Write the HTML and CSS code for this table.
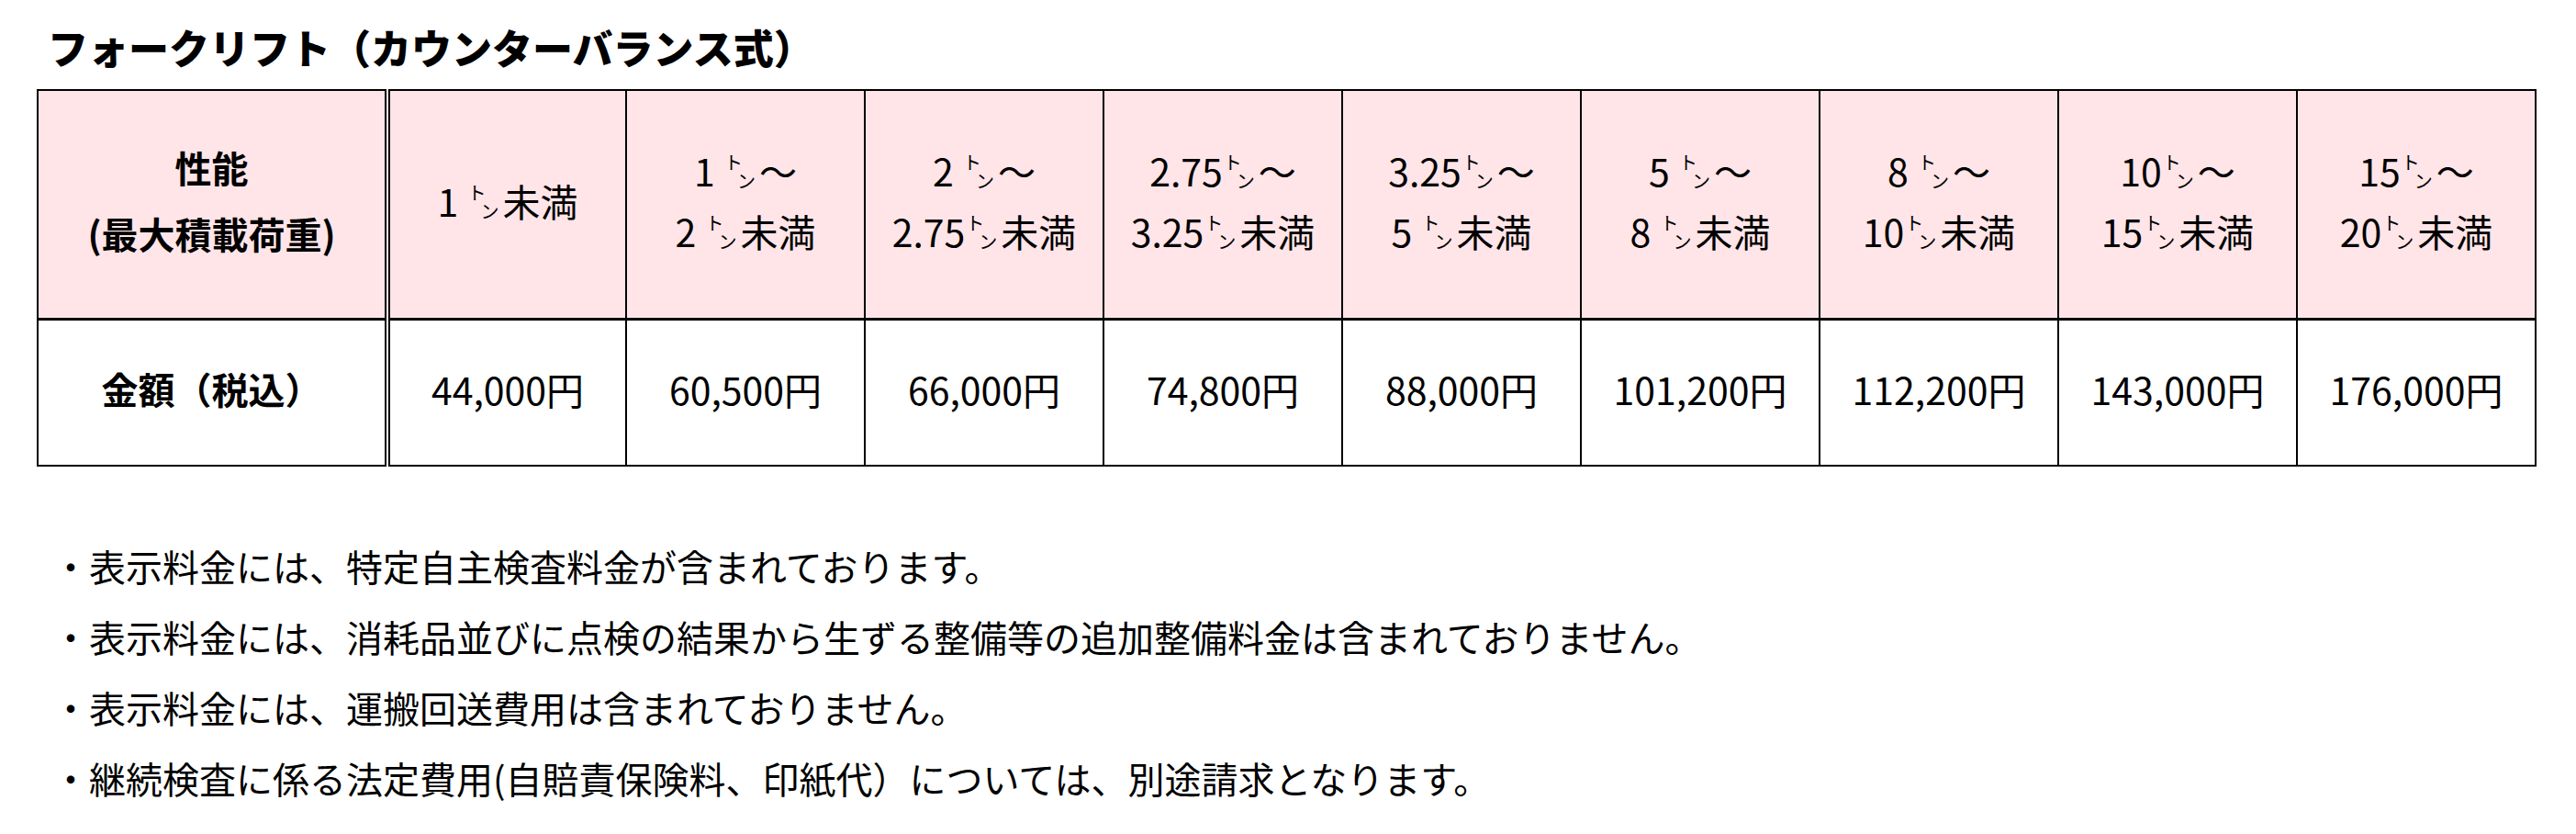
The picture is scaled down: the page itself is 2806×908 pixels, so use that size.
FILE: index.html
```html
<!DOCTYPE html>
<html lang="ja">
<head>
<meta charset="utf-8">
<title>フォークリフト（カウンターバランス式）</title>
<link rel="stylesheet" href="styles.css">
</head>
<body>
<div class="page">
  <h1 class="title">フォークリフト（カウンターバランス式）</h1>
  <table class="price">
    <colgroup>
      <col class="c-label">
      <col span="9" class="c-val">
    </colgroup>
    <thead>
      <tr>
        <th class="label">性能<br>(最大積載荷重)</th>
        <th>1 <span class="ton"><span class="to">ト</span><span class="n">ン</span></span>未満</th>
        <th>1 <span class="ton"><span class="to">ト</span><span class="n">ン</span></span>〜<br>2 <span class="ton"><span class="to">ト</span><span class="n">ン</span></span>未満</th>
        <th>2 <span class="ton"><span class="to">ト</span><span class="n">ン</span></span>〜<br>2.75<span class="ton"><span class="to">ト</span><span class="n">ン</span></span>未満</th>
        <th>2.75<span class="ton"><span class="to">ト</span><span class="n">ン</span></span>〜<br>3.25<span class="ton"><span class="to">ト</span><span class="n">ン</span></span>未満</th>
        <th>3.25<span class="ton"><span class="to">ト</span><span class="n">ン</span></span>〜<br>5 <span class="ton"><span class="to">ト</span><span class="n">ン</span></span>未満</th>
        <th>5 <span class="ton"><span class="to">ト</span><span class="n">ン</span></span>〜<br>8 <span class="ton"><span class="to">ト</span><span class="n">ン</span></span>未満</th>
        <th>8 <span class="ton"><span class="to">ト</span><span class="n">ン</span></span>〜<br>10<span class="ton"><span class="to">ト</span><span class="n">ン</span></span>未満</th>
        <th>10<span class="ton"><span class="to">ト</span><span class="n">ン</span></span>〜<br>15<span class="ton"><span class="to">ト</span><span class="n">ン</span></span>未満</th>
        <th>15<span class="ton"><span class="to">ト</span><span class="n">ン</span></span>〜<br>20<span class="ton"><span class="to">ト</span><span class="n">ン</span></span>未満</th>
      </tr>
    </thead>
    <tbody>
      <tr>
        <th class="label">金額（税込）</th>
        <td>44,000円</td>
        <td>60,500円</td>
        <td>66,000円</td>
        <td>74,800円</td>
        <td>88,000円</td>
        <td>101,200円</td>
        <td>112,200円</td>
        <td>143,000円</td>
        <td>176,000円</td>
      </tr>
    </tbody>
  </table>
  <ul class="notes">
    <li>・表示料金には、特定自主検査料金が含まれております。</li>
    <li>・表示料金には、消耗品並びに点検の結果から生ずる整備等の追加整備料金は含まれておりません。</li>
    <li>・表示料金には、運搬回送費用は含まれておりません。</li>
    <li>・継続検査に係る法定費用(自賠責保険料、印紙代）については、別途請求となります。</li>
  </ul>
</div>
</body>
</html>
```

FILE: styles.css
```css
html, body {
  margin: 0;
  padding: 0;
  background: #ffffff;
  color: #000000;
  font-family: "Noto Sans CJK JP", "Noto Sans", sans-serif;
}

.page {
  padding: 21px 0 0 40px;
}

.title {
  margin: 0 0 16px;
  padding-left: 12px;
  font-size: 44px;
  line-height: 60px;
  font-weight: 900;
  letter-spacing: 0;
}

.price {
  border-collapse: collapse;
  table-layout: fixed;
  width: 2722px;
  font-size: 41px;
}

.c-label {
  width: 381px;
}

.c-val {
  width: 260px;
}

.price th,
.price td {
  border: 2px solid #000000;
  text-align: center;
  vertical-align: middle;
  padding: 0 0 10px;
  font-weight: 400;
  white-space: nowrap;
}

.price thead th {
  background: #ffe5e8;
  height: 237px;
  line-height: 66px;
  border-bottom-width: 3px;
}

.price tbody th,
.price tbody td {
  height: 147px;
  line-height: 60px;
}

.price .label {
  font-weight: 700;
  font-size: 40px;
  border-right: 6px double #000000;
}

.price thead .label {
  line-height: 72px;
}

.ton {
  display: inline-block;
  width: 0.95em;
  vertical-align: -2px;
  text-align: left;
  line-height: 20px;
}

.ton .to,
.ton .n {
  display: block;
  font-size: 20px;
  line-height: 20px;
}

.ton .to {
  padding-left: 1px;
}

.ton .n {
  padding-left: 15px;
}

.notes {
  list-style: none;
  margin: 70px 0 0;
  padding: 0 0 0 17px;
  font-size: 40px;
  line-height: 77px;
}
```
